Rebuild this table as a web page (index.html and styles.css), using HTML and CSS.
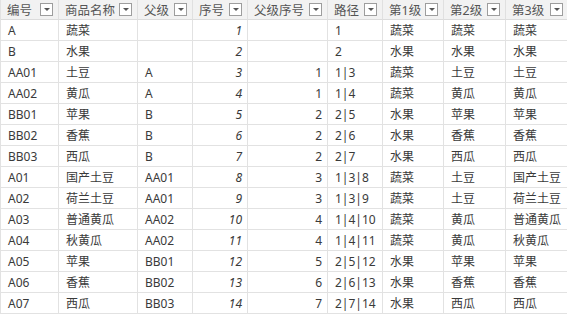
FILE: index.html
```html
<!DOCTYPE html>
<html>
<head>
<meta charset="utf-8">
<link rel="stylesheet" href="styles.css">
</head>
<body>
<div class="grid">
  <div class="h">编号<span class="dd"></span></div>
  <div class="h">商品名称<span class="dd"></span></div>
  <div class="h">父级<span class="dd"></span></div>
  <div class="h">序号<span class="dd"></span></div>
  <div class="h">父级序号<span class="dd"></span></div>
  <div class="h">路径<span class="dd"></span></div>
  <div class="h">第1级<span class="dd"></span></div>
  <div class="h">第2级<span class="dd"></span></div>
  <div class="h">第3级<span class="dd"></span></div>

  <div class="c">A</div><div class="c">蔬菜</div><div class="c"></div><div class="c n i">1</div><div class="c n"></div><div class="c">1</div><div class="c">蔬菜</div><div class="c">蔬菜</div><div class="c">蔬菜</div>
  <div class="c">B</div><div class="c">水果</div><div class="c"></div><div class="c n i">2</div><div class="c n"></div><div class="c">2</div><div class="c">水果</div><div class="c">水果</div><div class="c">水果</div>
  <div class="c">AA01</div><div class="c">土豆</div><div class="c">A</div><div class="c n i">3</div><div class="c n">1</div><div class="c">1|3</div><div class="c">蔬菜</div><div class="c">土豆</div><div class="c">土豆</div>
  <div class="c">AA02</div><div class="c">黄瓜</div><div class="c">A</div><div class="c n i">4</div><div class="c n">1</div><div class="c">1|4</div><div class="c">蔬菜</div><div class="c">黄瓜</div><div class="c">黄瓜</div>
  <div class="c">BB01</div><div class="c">苹果</div><div class="c">B</div><div class="c n i">5</div><div class="c n">2</div><div class="c">2|5</div><div class="c">水果</div><div class="c">苹果</div><div class="c">苹果</div>
  <div class="c">BB02</div><div class="c">香蕉</div><div class="c">B</div><div class="c n i">6</div><div class="c n">2</div><div class="c">2|6</div><div class="c">水果</div><div class="c">香蕉</div><div class="c">香蕉</div>
  <div class="c">BB03</div><div class="c">西瓜</div><div class="c">B</div><div class="c n i">7</div><div class="c n">2</div><div class="c">2|7</div><div class="c">水果</div><div class="c">西瓜</div><div class="c">西瓜</div>
  <div class="c">A01</div><div class="c">国产土豆</div><div class="c">AA01</div><div class="c n i">8</div><div class="c n">3</div><div class="c">1|3|8</div><div class="c">蔬菜</div><div class="c">土豆</div><div class="c">国产土豆</div>
  <div class="c">A02</div><div class="c">荷兰土豆</div><div class="c">AA01</div><div class="c n i">9</div><div class="c n">3</div><div class="c">1|3|9</div><div class="c">蔬菜</div><div class="c">土豆</div><div class="c">荷兰土豆</div>
  <div class="c">A03</div><div class="c">普通黄瓜</div><div class="c">AA02</div><div class="c n i">10</div><div class="c n">4</div><div class="c">1|4|10</div><div class="c">蔬菜</div><div class="c">黄瓜</div><div class="c">普通黄瓜</div>
  <div class="c">A04</div><div class="c">秋黄瓜</div><div class="c">AA02</div><div class="c n i">11</div><div class="c n">4</div><div class="c">1|4|11</div><div class="c">蔬菜</div><div class="c">黄瓜</div><div class="c">秋黄瓜</div>
  <div class="c">A05</div><div class="c">苹果</div><div class="c">BB01</div><div class="c n i">12</div><div class="c n">5</div><div class="c">2|5|12</div><div class="c">水果</div><div class="c">苹果</div><div class="c">苹果</div>
  <div class="c">A06</div><div class="c">香蕉</div><div class="c">BB02</div><div class="c n i">13</div><div class="c n">6</div><div class="c">2|6|13</div><div class="c">水果</div><div class="c">香蕉</div><div class="c">香蕉</div>
  <div class="c">A07</div><div class="c">西瓜</div><div class="c">BB03</div><div class="c n i">14</div><div class="c n">7</div><div class="c">2|7|14</div><div class="c">水果</div><div class="c">西瓜</div><div class="c">西瓜</div>
</div>
</body>
</html>
```
FILE: styles.css
```css
html, body {
  margin: 0;
  padding: 0;
  background: #ffffff;
}
body {
  font-family: "Noto Sans", "Noto Sans CJK SC", sans-serif;
  font-size: 12px;
  color: #3a3a3a;
}
.grid {
  display: grid;
  grid-template-columns: 58px 79px 55px 55px 80px 55px 61px 62px 63px;
  grid-auto-rows: 21px;
  grid-template-rows: 20px;
  width: 568px;
  border-left: 1px solid #e2e2e2;
  box-sizing: border-box;
}
.h {
  background: #f2f2f2;
  color: #555555;
  font-size: 12.5px;
  border-right: 1px solid #e0e0e0;
  border-bottom: 1px solid #dcdcdc;
  box-sizing: border-box;
  display: flex;
  align-items: center;
  padding-left: 6px;
  padding-right: 5px;
  white-space: nowrap;
  overflow: hidden;
}
.dd {
  margin-left: auto;
  flex: none;
  width: 13px;
  height: 13px;
  box-sizing: border-box;
  border: 1px solid #9d9d9d;
  background: #ffffff;
  display: flex;
  align-items: center;
  justify-content: center;
}
.dd::after {
  content: "";
  width: 0;
  height: 0;
  border-left: 3px solid transparent;
  border-right: 3px solid transparent;
  border-top: 3px solid #555555;
}
.c {
  border-right: 1px solid #e2e2e2;
  border-bottom: 1px solid #e2e2e2;
  box-sizing: border-box;
  display: flex;
  align-items: center;
  padding-left: 7px;
  padding-right: 5px;
  white-space: nowrap;
  overflow: hidden;
}
.n {
  justify-content: flex-end;
}
.i {
  font-style: italic;
}
```
